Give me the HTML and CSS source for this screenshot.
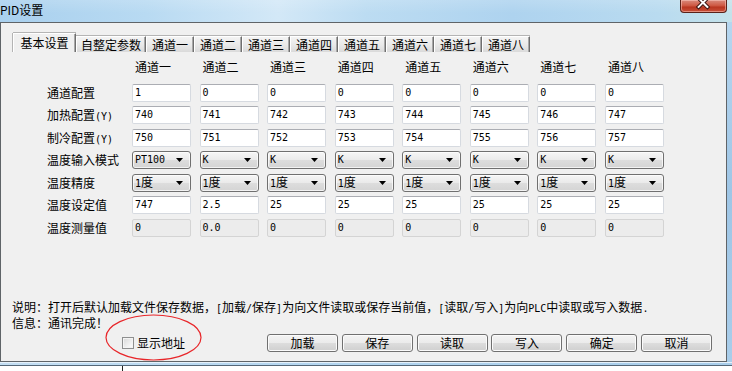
FILE: index.html
```html
<!DOCTYPE html>
<html lang="zh-CN">
<head>
<meta charset="utf-8">
<title>PID设置</title>
<link rel="stylesheet" href="styles.css">
</head>
<body>
<div class="win">
  <div class="titlebar">
    <span class="title">PID设置</span>
    <div class="close">
      <svg width="47" height="13" viewBox="0 0 47 13">
        <path d="M19 -2 L28 7 M28 -2 L19 7" stroke="#3a1410" stroke-width="4" stroke-linecap="square"/>
        <path d="M19 -2 L28 7 M28 -2 L19 7" stroke="#ffffff" stroke-width="2" stroke-linecap="square"/>
      </svg>
    </div>
  </div>
  <div class="mid">
    <div class="client">
      <div class="tabs">
        <div class="tab sel">基本设置</div>
        <div class="tab wide">自整定参数</div>
        <div class="tab">通道一</div>
        <div class="tab">通道二</div>
        <div class="tab">通道三</div>
        <div class="tab">通道四</div>
        <div class="tab">通道五</div>
        <div class="tab">通道六</div>
        <div class="tab">通道七</div>
        <div class="tab">通道八</div>
      </div>

      <div class="grid">
        <div class="head"></div>
        <div class="head">通道一</div>
        <div class="head">通道二</div>
        <div class="head">通道三</div>
        <div class="head">通道四</div>
        <div class="head">通道五</div>
        <div class="head">通道六</div>
        <div class="head">通道七</div>
        <div class="head">通道八</div>

        <div class="lbl">通道配置</div>
        <div class="box">1</div><div class="box">0</div><div class="box">0</div><div class="box">0</div>
        <div class="box">0</div><div class="box">0</div><div class="box">0</div><div class="box">0</div>

        <div class="lbl">加热配置<span class="half">(Y)</span></div>
        <div class="box">740</div><div class="box">741</div><div class="box">742</div><div class="box">743</div>
        <div class="box">744</div><div class="box">745</div><div class="box">746</div><div class="box">747</div>

        <div class="lbl">制冷配置<span class="half">(Y)</span></div>
        <div class="box">750</div><div class="box">751</div><div class="box">752</div><div class="box">753</div>
        <div class="box">754</div><div class="box">755</div><div class="box">756</div><div class="box">757</div>

        <div class="lbl">温度输入模式</div>
        <div class="combo"><span>PT100</span><svg class="arr" width="7" height="4"><path d="M0 0H7L3.5 4Z"/></svg></div>
        <div class="combo"><span>K</span><svg class="arr" width="7" height="4"><path d="M0 0H7L3.5 4Z"/></svg></div>
        <div class="combo"><span>K</span><svg class="arr" width="7" height="4"><path d="M0 0H7L3.5 4Z"/></svg></div>
        <div class="combo"><span>K</span><svg class="arr" width="7" height="4"><path d="M0 0H7L3.5 4Z"/></svg></div>
        <div class="combo"><span>K</span><svg class="arr" width="7" height="4"><path d="M0 0H7L3.5 4Z"/></svg></div>
        <div class="combo"><span>K</span><svg class="arr" width="7" height="4"><path d="M0 0H7L3.5 4Z"/></svg></div>
        <div class="combo"><span>K</span><svg class="arr" width="7" height="4"><path d="M0 0H7L3.5 4Z"/></svg></div>
        <div class="combo"><span>K</span><svg class="arr" width="7" height="4"><path d="M0 0H7L3.5 4Z"/></svg></div>

        <div class="lbl">温度精度</div>
        <div class="combo"><span>1<span class="cjk">度</span></span><svg class="arr" width="7" height="4"><path d="M0 0H7L3.5 4Z"/></svg></div>
        <div class="combo"><span>1<span class="cjk">度</span></span><svg class="arr" width="7" height="4"><path d="M0 0H7L3.5 4Z"/></svg></div>
        <div class="combo"><span>1<span class="cjk">度</span></span><svg class="arr" width="7" height="4"><path d="M0 0H7L3.5 4Z"/></svg></div>
        <div class="combo"><span>1<span class="cjk">度</span></span><svg class="arr" width="7" height="4"><path d="M0 0H7L3.5 4Z"/></svg></div>
        <div class="combo"><span>1<span class="cjk">度</span></span><svg class="arr" width="7" height="4"><path d="M0 0H7L3.5 4Z"/></svg></div>
        <div class="combo"><span>1<span class="cjk">度</span></span><svg class="arr" width="7" height="4"><path d="M0 0H7L3.5 4Z"/></svg></div>
        <div class="combo"><span>1<span class="cjk">度</span></span><svg class="arr" width="7" height="4"><path d="M0 0H7L3.5 4Z"/></svg></div>
        <div class="combo"><span>1<span class="cjk">度</span></span><svg class="arr" width="7" height="4"><path d="M0 0H7L3.5 4Z"/></svg></div>

        <div class="lbl">温度设定值</div>
        <div class="box">747</div><div class="box">2.5</div><div class="box">25</div><div class="box">25</div>
        <div class="box">25</div><div class="box">25</div><div class="box">25</div><div class="box">25</div>

        <div class="lbl">温度测量值</div>
        <div class="box dis">0</div><div class="box dis">0.0</div><div class="box dis">0</div><div class="box dis">0</div>
        <div class="box dis">0</div><div class="box dis">0</div><div class="box dis">0</div><div class="box dis">0</div>
      </div>

      <div class="notes">
        <div>说明：打开后默认加载文件保存数据，<span class="half">[</span>加载<span class="half">/</span>保存<span class="half">]</span>为向文件读取或保存当前值，<span class="half">[</span>读取<span class="half">/</span>写入<span class="half">]</span>为向<span class="half">PLC</span>中读取或写入数据<span class="half">.</span></div>
        <div>信息：通讯完成！</div>
      </div>

      <div class="bottom">
        <label class="chk"><span class="box-chk"></span><span>显示地址</span></label>
        <div class="buttons">
          <div class="btn">加载</div>
          <div class="btn">保存</div>
          <div class="btn">读取</div>
          <div class="btn">写入</div>
          <div class="btn">确定</div>
          <div class="btn">取消</div>
        </div>
      </div>

      <svg class="mark" width="97" height="47" viewBox="0 0 97 47">
        <ellipse cx="48.5" cy="23.5" rx="47.5" ry="22.5" fill="none" stroke="#e8262a" stroke-width="1.2"/>
      </svg>
    </div>
    <div class="frame-r"></div>
  </div>
  <div class="frame-b"></div>
  <div class="behind"><div class="behind-cell"></div><div class="behind-cell grow"></div></div>
</div>
</body>
</html>
```
FILE: styles.css
```css
html, body {
  margin: 0;
  padding: 0;
}
body {
  width: 732px;
  height: 371px;
  overflow: hidden;
  background: #ffffff;
  font-family: "Noto Sans CJK SC", "Liberation Sans", sans-serif;
  font-size: 12px;
  color: #000;
}
.win {
  display: flex;
  flex-direction: column;
  width: 732px;
  height: 371px;
}
.titlebar {
  height: 22px;
  display: flex;
  align-items: flex-start;
  background:
    linear-gradient(180deg, rgba(255,255,255,0.15), rgba(255,255,255,0) 60%),
    linear-gradient(90deg, #a9d0ee 0%, #b8daf2 20%, #d3e8f7 38%, #bcdcf2 50%, #aed3ef 70%, #b9dbf0 90%, #c4e2ea 100%);
}
.title {
  padding: 2px 0 0 0;
  line-height: 16px;
  font-size: 12px;
  color: #000;
}
.close {
  margin-left: auto;
  margin-right: 5px;
  width: 47px;
  height: 13px;
  box-sizing: border-box;
  border: 1px solid #5a2219;
  border-top: none;
  border-radius: 0 0 4px 4px;
  background: linear-gradient(180deg, #d98a7c 0%, #cf5b45 45%, #b93620 60%, #c9513a 100%);
  box-shadow: inset 0 0 0 1px rgba(255,210,200,0.5);
  display: flex;
}
.close svg { display: block; margin-left: -1px; }
.mid {
  display: flex;
  height: 340px;
}
.client {
  position: relative;
  width: 727px;
  height: 340px;
  box-sizing: border-box;
  border: 1px solid #5f6468;
  background: #f0f0f0;
  display: flex;
  flex-direction: column;
}
.frame-r {
  flex: 1;
  background: linear-gradient(180deg, #b6d6ef 0%, #9fc6e6 50%, #a9cdea 100%);
}
.frame-b {
  height: 4px;
  background: linear-gradient(90deg, #c3def3, #b1d4ef 50%, #a8cdea);
  border-top: 1px solid #e6f1fa;
  box-sizing: border-box;
  border-bottom: 1px solid #556879;
}
.behind {
  flex: 1;
  display: flex;
  background: #ffffff;
}
.behind-cell {
  width: 122px;
  border-right: 1px solid #222;
}
.behind-cell.grow { flex: 1; border-right: none; }

/* tabs */
.tabs {
  display: flex;
  align-items: flex-end;
  margin-top: 10px;
  padding-left: 12px;
  height: 19px;
}
.tab {
  box-sizing: border-box;
  width: 48px;
  height: 16px;
  line-height: 15px;
  text-align: center;
  font-size: 12px;
  border-top: 1px solid #ffffff;
  border-left: 1px solid #ffffff;
  border-right: 1px solid #6f6f6f;
  box-shadow: inset -1px 0 0 #a8a8a8, 0 -1px 0 #b4b4b4;
  background: linear-gradient(180deg, #f4f4f4 0%, #e8e8e8 55%, #dadada 100%);
}
.tab.wide { width: 70px; }
.tab.sel {
  width: 63px;
  height: 19px;
  line-height: 17px;
  background: #f0f0f0;
  box-shadow: inset -1px 0 0 #a8a8a8, 0 -1px 0 #b4b4b4, -1px 0 0 #b4b4b4;
}

/* grid */
.grid {
  display: grid;
  grid-template-columns: 76.4px repeat(8, 59px);
  grid-template-rows: 20px repeat(7, 18px);
  column-gap: 8.57px;
  row-gap: 4.5px;
  margin-top: 7px;
  margin-left: 46px;
}
.head {
  padding-left: 3px;
  line-height: 16px;
  padding-bottom: 4px;
  white-space: nowrap;
}
.lbl {
  line-height: 18px;
  white-space: nowrap;
}
.half {
  font-family: "DejaVu Sans Mono", monospace;
  font-size: 10px;
}
.box {
  box-sizing: border-box;
  height: 18px;
  border: 1px solid #d6dae0;
  border-top-color: #abadb3;
  border-radius: 2px;
  background: #ffffff;
  padding-left: 2px;
  font-family: "DejaVu Sans Mono", "Noto Sans CJK SC", monospace;
  font-size: 10px;
  line-height: 16px;
  color: #000;
}
.box.dis {
  background: #ececec;
  border-color: #d4d4d4;
}
.combo {
  box-sizing: border-box;
  height: 18px;
  border: 1px solid #707070;
  border-radius: 3px;
  background: linear-gradient(180deg, #f6f6f6 0%, #eaeaea 50%, #dddddd 51%, #d4d4d4 100%);
  box-shadow: inset 0 0 0 1px rgba(255,255,255,0.7);
  display: flex;
  align-items: center;
  padding: 0 7px 0 2px;
  font-family: "DejaVu Sans Mono", "Noto Sans CJK SC", monospace;
  font-size: 10px;
  line-height: 16px;
}
.combo .cjk {
  font-family: "Noto Sans CJK SC", sans-serif;
  font-size: 12px;
}
.combo .arr {
  margin-left: auto;
  fill: #000;
  display: block;
}

/* notes */
.notes {
  margin-top: 63px;
  margin-left: 11px;
  line-height: 14px;
  white-space: nowrap;
}

/* bottom row */
.bottom {
  display: flex;
  align-items: center;
  height: 18px;
  margin-top: 4.5px;
  padding-left: 121px;
  padding-right: 14px;
}
.chk {
  display: flex;
  align-items: center;
  gap: 3px;
  line-height: 14px;
}
.box-chk {
  width: 12px;
  height: 12px;
  box-sizing: border-box;
  border: 1px solid #8e8f8f;
  background: linear-gradient(135deg, #d8d8d8 0%, #f4f4f4 70%, #fdfdfd 100%);
  box-shadow: inset 0 0 0 1px #f4f4f4;
}
.buttons {
  margin-left: auto;
  display: flex;
  gap: 3.8px;
}
.btn {
  box-sizing: border-box;
  width: 71px;
  height: 18px;
  border: 1px solid #707070;
  border-radius: 3px;
  background: linear-gradient(180deg, #f3f3f3 0%, #ebebeb 50%, #dddddd 51%, #cfcfcf 100%);
  box-shadow: inset 0 0 0 1px #fbfbfb;
  text-align: center;
  line-height: 16px;
}

.mark {
  position: absolute;
  left: 104px;
  top: 291px;
}
```
